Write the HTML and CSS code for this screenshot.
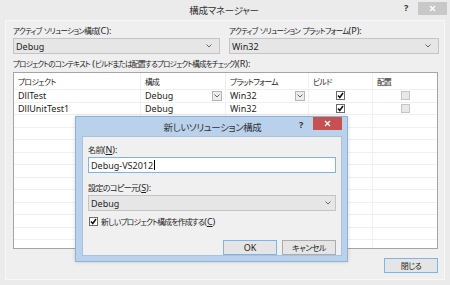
FILE: index.html
```html
<!DOCTYPE html>
<html lang="ja">
<head>
<meta charset="utf-8">
<link rel="stylesheet" href="styles.css">
</head>
<body>
<div class="window">
  <div class="titlebar">
    <div class="title"><span class="j">構成マネージャー</span></div>
    <div class="help">?</div>
    <div class="close gray"><svg width="7" height="7" viewBox="0 0 7 7"><path d="M1 1L6 6M6 1L1 6" stroke="#fff" stroke-width="1.3"/></svg></div>
  </div>
  <div class="panel">
    <div class="combos">
      <div class="field">
        <div class="label"><span class="j">アクティブ ソリューション構成</span>(C):</div>
        <div class="select"><span>Debug</span><svg class="chev" width="6" height="4" viewBox="0 0 6 4"><path d="M0.5 0.5L3 3L5.5 0.5" fill="none" stroke="#666" stroke-width="1"/></svg></div>
      </div>
      <div class="field">
        <div class="label"><span class="j">アクティブ ソリューション プラットフォーム</span>(P):</div>
        <div class="select"><span>Win32</span><svg class="chev" width="6" height="4" viewBox="0 0 6 4"><path d="M0.5 0.5L3 3L5.5 0.5" fill="none" stroke="#666" stroke-width="1"/></svg></div>
      </div>
    </div>
    <div class="label ctx"><span class="j">プロジェクトのコンテキスト</span> (<span class="j">ビルドまたは配置するプロジェクト構成をチェック</span>)(R):</div>
    <div class="grid">
      <div class="row head">
        <div class="c c1"><span class="j">プロジェクト</span></div>
        <div class="c c2"><span class="j">構成</span></div>
        <div class="c c3"><span class="j">プラットフォーム</span></div>
        <div class="c c4"><span class="j">ビルド</span></div>
        <div class="c c5"><span class="j">配置</span></div>
      </div>
      <div class="row">
        <div class="c c1">DllTest</div>
        <div class="c c2">Debug<span class="dd"><svg width="6" height="4" viewBox="0 0 6 4"><path d="M0.5 0.5L3 3L5.5 0.5" fill="none" stroke="#666" stroke-width="1"/></svg></span></div>
        <div class="c c3">Win32<span class="dd"><svg width="6" height="4" viewBox="0 0 6 4"><path d="M0.5 0.5L3 3L5.5 0.5" fill="none" stroke="#666" stroke-width="1"/></svg></span></div>
        <div class="c c4 ctr"><span class="cb"><svg width="7" height="7" viewBox="0 0 7 7"><path d="M1 3.5L2.8 5.5L6 1" fill="none" stroke="#111" stroke-width="1.5"/></svg></span></div>
        <div class="c c5 ctr"><span class="cb dis"></span></div>
      </div>
      <div class="row">
        <div class="c c1">DllUnitTest1</div>
        <div class="c c2">Debug</div>
        <div class="c c3">Win32</div>
        <div class="c c4 ctr"><span class="cb"><svg width="7" height="7" viewBox="0 0 7 7"><path d="M1 3.5L2.8 5.5L6 1" fill="none" stroke="#111" stroke-width="1.5"/></svg></span></div>
        <div class="c c5 ctr"><span class="cb dis"></span></div>
      </div>
      <div class="row"><div class="c c1"></div><div class="c c2"></div><div class="c c3"></div><div class="c c4"></div><div class="c c5"></div></div>
      <div class="row"><div class="c c1"></div><div class="c c2"></div><div class="c c3"></div><div class="c c4"></div><div class="c c5"></div></div>
      <div class="row"><div class="c c1"></div><div class="c c2"></div><div class="c c3"></div><div class="c c4"></div><div class="c c5"></div></div>
      <div class="row"><div class="c c1"></div><div class="c c2"></div><div class="c c3"></div><div class="c c4"></div><div class="c c5"></div></div>
      <div class="row"><div class="c c1"></div><div class="c c2"></div><div class="c c3"></div><div class="c c4"></div><div class="c c5"></div></div>
      <div class="row"><div class="c c1"></div><div class="c c2"></div><div class="c c3"></div><div class="c c4"></div><div class="c c5"></div></div>
      <div class="row"><div class="c c1"></div><div class="c c2"></div><div class="c c3"></div><div class="c c4"></div><div class="c c5"></div></div>
      <div class="row"><div class="c c1"></div><div class="c c2"></div><div class="c c3"></div><div class="c c4"></div><div class="c c5"></div></div>
      <div class="row"><div class="c c1"></div><div class="c c2"></div><div class="c c3"></div><div class="c c4"></div><div class="c c5"></div></div>
      <div class="row"><div class="c c1"></div><div class="c c2"></div><div class="c c3"></div><div class="c c4"></div><div class="c c5"></div></div>
      <div class="fill"><div class="c c1"></div><div class="c c2"></div><div class="c c3"></div><div class="c c4"></div><div class="c c5"></div></div>
    </div>
    <div class="footer">
      <div class="btn close-btn"><span class="j">閉じる</span></div>
    </div>
  </div>

  <div class="dialog">
    <div class="dtitlebar">
      <div class="dtitle"><span class="j">新しいソリューション構成</span></div>
      <div class="help">?</div>
      <div class="close red"><svg width="7" height="7" viewBox="0 0 7 7"><path d="M1 1L6 6M6 1L1 6" stroke="#fff" stroke-width="1.3"/></svg></div>
    </div>
    <div class="dbody">
      <div class="label"><span class="j">名前</span>(<u>N</u>):</div>
      <div class="input">Debug-VS2012<span class="caret"></span></div>
      <div class="label l2"><span class="j">設定のコピー元</span>(<u>S</u>):</div>
      <div class="select dsel"><span>Debug</span><svg class="chev" width="6" height="4" viewBox="0 0 6 4"><path d="M0.5 0.5L3 3L5.5 0.5" fill="none" stroke="#666" stroke-width="1"/></svg></div>
      <div class="check">
        <span class="cb"><svg width="7" height="7" viewBox="0 0 7 7"><path d="M1 3.5L2.8 5.5L6 1" fill="none" stroke="#111" stroke-width="1.5"/></svg></span>
        <span><span class="j">新しいプロジェクト構成を作成する</span>(<u>C</u>)</span>
      </div>
      <div class="buttons">
        <div class="btn ok">OK</div>
        <div class="btn"><span class="j">キャンセル</span></div>
      </div>
    </div>
  </div>
</div>
</body>
</html>
```

FILE: styles.css
```css
* { box-sizing: border-box; }
html, body { margin: 0; padding: 0; }
body {
  width: 450px; height: 285px; overflow: hidden;
  font-family: "Noto Sans", "Noto Sans CJK JP", sans-serif;
  font-size: 9px;
  color: #1e1e1e;
  font-feature-settings: "palt";
}
.j {
  font-family: "Noto Sans CJK JP", sans-serif;
  font-size: 7.5px;
  letter-spacing: -0.7px;
  word-spacing: 1.5px;
  font-feature-settings: "palt";
}
.window {
  position: relative;
  width: 450px; height: 285px;
  background: #ebebeb;
  display: flex; flex-direction: column;
}
.titlebar {
  height: 20px;
  display: flex; align-items: flex-start;
}
.title {
  flex: 1;
  text-align: center;
  line-height: 20px;
  padding-left: 44px;
  color: #333;
}
.title .j { font-size: 9.5px; letter-spacing: -0.3px; }
.help {
  font-weight: bold;
  font-size: 9px;
  line-height: 14px;
  padding-top: 1px;
  width: 14px;
  color: #333;
}
.close {
  width: 29px; height: 13px;
  margin-top: 2px; margin-right: 3px;
  display: flex; align-items: center; justify-content: center;
}
.close.gray { background: #c8c8c8; }
.close.red { background: #c75050; }
.panel {
  flex: 1;
  margin: 0 5px 5px 5px;
  border: 1px solid #f7f7f7;
  background: #efefef;
  padding: 3px 5px 0 7px;
  display: flex; flex-direction: column;
}
.combos {
  display: grid;
  grid-template-columns: 207px 210px;
  column-gap: 9px;
}
.label {
  line-height: 13px;
  height: 13px;
  white-space: nowrap;
}
.select {
  height: 16px;
  margin-top: 1px;
  border: 1px solid #c4c4c4;
  background: #e6e6e6;
  display: flex; align-items: center; justify-content: space-between;
  padding: 0 7px 0 2px;
}
.chev { display: block; }
.ctx { margin-top: 3px; }
.ctx .j { letter-spacing: -0.8px; }
.grid {
  margin-top: 2px;
  height: 177px;
  width: 425px;
  border: 1px solid #a5a5a5;
  background: #fff;
  display: flex; flex-direction: column;
  overflow: hidden;
}
.row { display: flex; height: 12.5px; border-bottom: 1px solid #f0f0f0; }
.row.head { height: 17px; }
.fill { display: flex; flex: 1; }
.c {
  border-right: 1px solid #f0f0f0;
  padding-left: 4px;
  display: flex; align-items: center;
  white-space: nowrap;
  position: relative;
}
.c1 { width: 127px; }
.c2 { width: 85px; }
.c3 { width: 83px; }
.c4 { width: 64px; }
.c5 { flex: 1; border-right: none; }
.ctr { justify-content: center; padding-left: 0; }
.head .j { font-size: 7.8px; letter-spacing: -0.7px; }
.dd {
  position: absolute; right: 3px; top: 1px;
  width: 10px; height: 10px;
  border: 1px solid #b5b5b5;
  background: #ececec;
  display: flex; align-items: center; justify-content: center;
}
.cb {
  width: 9px; height: 9px;
  border: 1px solid #6b6b6b;
  background: #fff;
  display: inline-flex; align-items: center; justify-content: center;
}
.cb.dis { border-color: #c5c5c5; background: #e8e8e8; }
.footer {
  display: flex; justify-content: flex-end;
  padding: 9px 1px 0 0;
}
.btn {
  width: 54px; height: 15px;
  border: 1px solid #acacac;
  background: #e5e5e5;
  display: flex; align-items: center; justify-content: center;
}
.btn .j { font-size: 8px; letter-spacing: -0.5px; }
.close-btn { border-color: #7eb4ea; }
.dialog {
  position: absolute;
  left: 75px; top: 116px;
  width: 273px; height: 146px;
  background: #b9d1ea;
  border: 1px solid #8fb2d9;
  display: flex; flex-direction: column;
  padding: 0 5px 5px 6px;
  box-shadow: 0 0 4px rgba(0,0,0,0.15);
}
.dtitlebar {
  height: 19px;
  display: flex; align-items: flex-start;
}
.dtitle {
  flex: 1; text-align: center;
  line-height: 20px;
  padding-left: 44px;
  color: #333;
}
.dtitle .j { font-size: 9.5px; letter-spacing: -0.4px; }
.dtitlebar .close { margin-right: 0; margin-top: 0; }
.dbody {
  flex: 1;
  background: #f0f0f0;
  border: 1px solid #a9c3de;
  padding: 6px 5px 0 5px;
  display: flex; flex-direction: column;
}
.dbody .label .j { font-size: 8px; letter-spacing: -0.6px; }
.check .j { font-size: 7.8px; letter-spacing: -0.8px; }
.input {
  height: 16px;
  margin-top: 1px;
  border: 1px solid #7eb4ea;
  background: #fff;
  display: flex; align-items: center;
  padding-left: 2px;
}
.caret { width: 1px; height: 10px; background: #000; margin-left: 0.5px; }
.l2 { margin-top: 8px; }
.dsel { padding-right: 4px; }
.check {
  display: flex; align-items: center; gap: 3px;
  margin-top: 3px; height: 14px;
  padding-left: 1px;
}
.buttons {
  display: flex; justify-content: flex-end; gap: 5px;
  margin-top: 12px;
}
.ok { border-color: #7eb4ea; }
u { text-decoration: underline; }
```
